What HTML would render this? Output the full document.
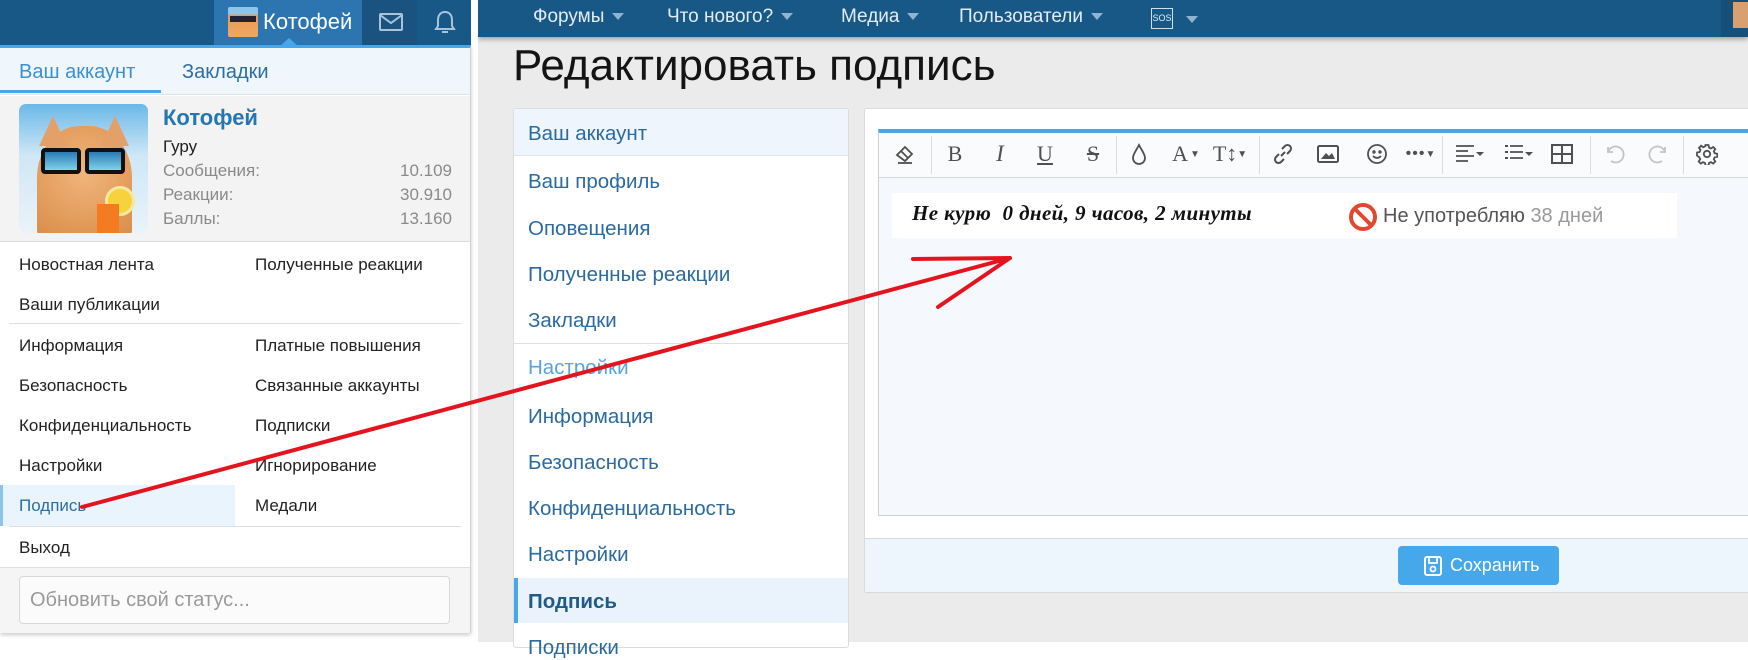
<!DOCTYPE html>
<html><head><meta charset="utf-8">
<style>
*{margin:0;padding:0;box-sizing:border-box}
body{width:1748px;height:642px;overflow:hidden;background:#fff;font-family:"Liberation Sans",sans-serif;position:relative}
.a{position:absolute;white-space:nowrap}
.lp{font-size:17px;color:#222}
.sb{font-size:20.5px;color:#2b6aa0}
.nav{font-size:19px;color:#e3ecf4}
.tri{display:inline-block;width:0;height:0;border-left:6px solid transparent;border-right:6px solid transparent;border-top:7px solid #8fb3d1;vertical-align:middle;margin-left:8px}
.ti{position:absolute;top:142px;height:24px;display:flex;align-items:center;justify-content:center;color:#505050}
.sep{position:absolute;top:136px;width:1px;height:38px;background:#dcdcdc}
</style></head><body>

<!-- RIGHT PAGE -->
<div class="a" style="left:478px;top:0;width:1270px;height:642px;background:#ebebeb"></div>
<div class="a" style="left:478px;top:0;width:1270px;height:37px;background:#185886;box-shadow:0 2px 5px rgba(0,0,0,.35)"></div>
<div class="a" style="left:1721px;top:0;width:27px;height:37px;background:#164f79"></div>
<div class="a" style="left:1733px;top:2px;width:15px;height:26px;background:#d8a070"></div>
<div class="a nav" style="left:533px;top:6px">Форумы<span class="tri"></span></div>
<div class="a nav" style="left:667px;top:6px">Что нового?<span class="tri"></span></div>
<div class="a nav" style="left:841px;top:6px">Медиа<span class="tri"></span></div>
<div class="a nav" style="left:959px;top:6px">Пользователи<span class="tri"></span></div>
<div class="a" style="left:1151px;top:8px;width:22px;height:21px;border:1.5px solid #cfe0ee;color:#e3ecf4;font-size:9px;line-height:18px;text-align:center">SOS</div>
<div class="a" style="left:1178px;top:11px"><span class="tri"></span></div>

<div class="a" style="left:513px;top:41px;font-size:44px;color:#141414">Редактировать подпись</div>

<!-- sidebar -->
<div class="a" style="left:513px;top:108px;width:336px;height:540px;background:#fff;border:1px solid #dcdcdc;border-radius:3px"></div>
<div class="a" style="left:514px;top:109px;width:334px;height:47px;background:#eef5fc;border-bottom:1px solid #dde6ee"></div>
<div class="a" style="left:514px;top:343px;width:334px;height:1px;background:#e0e0e0"></div>
<div class="a" style="left:514px;top:578px;width:334px;height:45px;background:#eaf3fc;border-left:4px solid #47a7eb"></div>
<div class="a sb" style="left:528px;top:122px">Ваш аккаунт</div>
<div class="a sb" style="left:528px;top:170px">Ваш профиль</div>
<div class="a sb" style="left:528px;top:217px">Оповещения</div>
<div class="a sb" style="left:528px;top:263px">Полученные реакции</div>
<div class="a sb" style="left:528px;top:309px">Закладки</div>
<div class="a sb" style="left:528px;top:356px;color:#5aa4dd">Настройки</div>
<div class="a sb" style="left:528px;top:405px">Информация</div>
<div class="a sb" style="left:528px;top:451px">Безопасность</div>
<div class="a sb" style="left:528px;top:497px">Конфиденциальность</div>
<div class="a sb" style="left:528px;top:543px">Настройки</div>
<div class="a sb" style="left:528px;top:590px;font-weight:bold;color:#1f5a88">Подпись</div>
<div class="a sb" style="left:528px;top:636px">Подписки</div>

<!-- main panel -->
<div class="a" style="left:864px;top:108px;width:890px;height:485px;background:#fff;border:1px solid #dcdcdc;border-radius:3px"></div>
<div class="a" style="left:878px;top:129px;width:880px;height:387px;border:1px solid #d0d0d0;border-top:4px solid #47a7eb;background:#f5f9fd"></div>
<div class="a" style="left:879px;top:133px;width:870px;height:45px;background:#fafbfc;border-bottom:1px solid #d8d8d8"></div>
<div class="a" style="left:865px;top:538px;width:883px;height:55px;background:#edf5fd;border-top:1px solid #d8d8d8;border-bottom:1px solid #d8d8d8"></div>
<div class="a" style="left:1398px;top:546px;width:161px;height:39px;background:#47a7eb;border-radius:4px;color:#fff;font-size:18px;line-height:39px;padding-left:52px">Сохранить</div>
<svg class="a" style="left:1424px;top:556px" width="18" height="20" viewBox="0 0 18 20"><rect x="1" y="1" width="16" height="18" rx="2" fill="none" stroke="#fff" stroke-width="2"/><rect x="5" y="1" width="8" height="6" fill="none" stroke="#fff" stroke-width="1.8"/><circle cx="9" cy="13" r="2.5" fill="none" stroke="#fff" stroke-width="1.8"/></svg>

<!-- toolbar -->
<div class="sep" style="left:931px"></div><div class="sep" style="left:1116px"></div><div class="sep" style="left:1259px"></div>
<div class="sep" style="left:1442px"></div><div class="sep" style="left:1590px"></div><div class="sep" style="left:1683px"></div>
<svg class="a" style="left:894px;top:143px" width="22" height="22" viewBox="0 0 22 22" fill="none" stroke="#505050" stroke-width="1.8"><path d="M3 12 L11 4 L18 11 L11 18 Z M7 8 L14 15"/><path d="M4 20 H18"/></svg>
<div class="ti" style="left:944px;width:22px;font-size:22px;font-family:'Liberation Serif',serif">B</div>
<div class="ti" style="left:989px;width:22px;font-size:23px;font-family:'Liberation Serif',serif;font-style:italic">I</div>
<div class="ti" style="left:1034px;width:22px;font-size:22px;font-family:'Liberation Serif',serif;text-decoration:underline">U</div>
<div class="ti" style="left:1082px;width:22px;font-size:22px;font-family:'Liberation Serif',serif;text-decoration:line-through">S</div>
<svg class="a" style="left:1130px;top:143px" width="18" height="22" viewBox="0 0 18 22" fill="none" stroke="#505050" stroke-width="1.8"><path d="M9 2 C6 8 3 11 3 15 A6 6 0 0 0 15 15 C15 11 12 8 9 2Z"/></svg>
<div class="ti" style="left:1168px;width:36px;font-size:22px;font-family:'Liberation Serif',serif">A<span style="font-size:10px;margin-left:2px">▼</span></div>
<div class="ti" style="left:1212px;width:36px;font-size:22px;font-family:'Liberation Serif',serif">T↕<span style="font-size:10px">▼</span></div>
<svg class="a" style="left:1272px;top:143px" width="22" height="22" viewBox="0 0 22 22" fill="none" stroke="#505050" stroke-width="2"><path d="M9 13 L13 9 M7 11 L4 14 A3.5 3.5 0 0 0 9 19 L12 16 M15 11 L18 8 A3.5 3.5 0 0 0 13 3 L10 6"/></svg>
<svg class="a" style="left:1317px;top:145px" width="22" height="18" viewBox="0 0 22 18"><rect x="1" y="1" width="20" height="16" rx="1.5" fill="none" stroke="#505050" stroke-width="2"/><path d="M4 14 L9 8 L12 11 L15 8 L18 14Z" fill="#505050"/></svg>
<svg class="a" style="left:1366px;top:143px" width="22" height="22" viewBox="0 0 22 22" fill="none" stroke="#505050" stroke-width="1.8"><circle cx="11" cy="11" r="9"/><circle cx="8" cy="9" r=".8" fill="#505050"/><circle cx="14" cy="9" r=".8" fill="#505050"/><path d="M7 13 Q11 17 15 13"/></svg>
<div class="ti" style="left:1403px;width:36px;font-size:16px;letter-spacing:1px">•••<span style="font-size:10px">▼</span></div>
<svg class="a" style="left:1455px;top:144px" width="30" height="20" viewBox="0 0 30 20"><path d="M1 2H19M1 7H13M1 12H19M1 17H13" stroke="#505050" stroke-width="1.8"/><path d="M21 8H29L25 12Z" fill="#505050"/></svg>
<svg class="a" style="left:1504px;top:144px" width="30" height="20" viewBox="0 0 30 20"><path d="M6 2H19M6 8H19M6 14H19" stroke="#505050" stroke-width="1.8"/><path d="M1 1h3v2H1zM1 7h3v2H1zM1 13h3v2H1z" fill="#505050"/><path d="M21 8H29L25 12Z" fill="#505050"/></svg>
<svg class="a" style="left:1551px;top:144px" width="22" height="20" viewBox="0 0 22 20" fill="none" stroke="#505050" stroke-width="2"><rect x="1" y="1" width="20" height="18"/><path d="M11 1V19M1 10H21"/></svg>
<svg class="a" style="left:1603px;top:143px" width="22" height="22" viewBox="0 0 22 22" fill="none" stroke="#c4c4c4" stroke-width="1.8"><path d="M5 4V9H10M5 9 A8 8 0 1 1 8 18"/></svg>
<svg class="a" style="left:1648px;top:143px" width="22" height="22" viewBox="0 0 22 22" fill="none" stroke="#c4c4c4" stroke-width="1.8"><path d="M17 4V9H12M17 9 A8 8 0 1 0 14 18"/></svg>
<svg class="a" style="left:1696px;top:143px" width="22" height="22" viewBox="0 0 22 22" fill="none" stroke="#505050" stroke-width="1.8"><circle cx="11" cy="11" r="3.2"/><path d="M9.5 2h3l.5 2.6 2 .9 2.2-1.5 2.1 2.1-1.5 2.2.9 2 2.6.5v3l-2.6.5-.9 2 1.5 2.2-2.1 2.1-2.2-1.5-2 .9-.5 2.6h-3l-.5-2.6-2-.9-2.2 1.5-2.1-2.1 1.5-2.2-.9-2L1 12.5v-3l2.6-.5.9-2L3 4.8 5.1 2.7 7.3 4.2l2-.9z"/></svg>

<!-- signature -->
<div class="a" style="left:892px;top:193px;width:785px;height:45px;background:#fff"></div>
<div class="a" style="left:912px;top:201px;font-family:'Liberation Serif',serif;font-weight:bold;font-style:italic;font-size:21px;color:#111;letter-spacing:0.4px">Не курю&nbsp; 0 дней, 9 часов, 2 минуты</div>
<svg class="a" style="left:1347px;top:201px" width="32" height="32" viewBox="0 0 32 32"><circle cx="16" cy="16" r="12" fill="none" stroke="#e0492f" stroke-width="4"/><path d="M8 8 L24 24" stroke="#e0492f" stroke-width="4"/></svg>
<div class="a" style="left:1383px;top:205px;font-size:20px;color:#555">Не употребляю <span style="color:#999">38 дней</span></div>

<!-- LEFT PANEL -->
<div class="a" style="left:0;top:0;width:478px;height:642px;background:#fff"></div>
<div class="a" style="left:0;top:0;width:471px;height:45px;background:#185886"></div>
<div class="a" style="left:214px;top:0;width:148px;height:45px;background:#2c75b1"></div>
<div class="a" style="left:362px;top:0;width:55px;height:45px;background:#1a5380"></div>
<div class="a" style="left:228px;top:7px;width:30px;height:30px;background:linear-gradient(#8cc6ec 0,#8cc6ec 25%,#e69a57 25%,#f0a860 100%);border-radius:2px"></div>
<div class="a" style="left:230px;top:16px;width:26px;height:6px;background:#223"></div>
<div class="a" style="left:263px;top:9px;font-size:22px;color:#fff">Котофей</div>
<svg class="a" style="left:379px;top:13px" width="24" height="18" viewBox="0 0 24 18" fill="none" stroke="#a8c4dc" stroke-width="2"><rect x="1" y="1" width="22" height="16" rx="1"/><path d="M1 2 L12 10 L23 2"/></svg>
<svg class="a" style="left:434px;top:10px" width="22" height="26" viewBox="0 0 22 26" fill="none" stroke="#a8c4dc" stroke-width="2"><path d="M11 2 C6 2 4 6 4 10 V16 L2 19 H20 L18 16 V10 C18 6 16 2 11 2Z M8 22 H14"/></svg>
<div class="a" style="left:280px;top:38px;width:0;height:0;border-left:9px solid transparent;border-right:9px solid transparent;border-bottom:8px solid #47a7eb"></div>
<div class="a" style="left:0;top:45px;width:471px;height:588px;background:#fff;border-top:3px solid #47a7eb;border-right:1px solid #d0d0d0;box-shadow:0 2px 4px rgba(0,0,0,.2)"></div>
<div class="a" style="left:0;top:48px;width:470px;height:47px;background:#eff6fc;border-bottom:1px solid #dde3e8"></div>
<div class="a" style="left:0;top:90px;width:161px;height:3px;background:#47a7eb"></div>
<div class="a" style="left:19px;top:61px;font-size:20px;color:#3d8fd0">Ваш аккаунт</div>
<div class="a" style="left:182px;top:61px;font-size:20px;color:#2c6ea3">Закладки</div>
<div class="a" style="left:0;top:96px;width:470px;height:146px;background:#f3f3f3;border-bottom:1px solid #dcdcdc"></div>
<div class="a" style="left:19px;top:104px;width:129px;height:129px;border-radius:7px;overflow:hidden;background:linear-gradient(180deg,#6bb8e8 0%,#cfe7f6 40%,#e9f3f9 100%)">
  <div style="position:absolute;left:18px;top:22px;width:95px;height:115px;border-radius:45% 45% 10% 10%;background:radial-gradient(circle at 50% 40%,#f0b67c,#d98a46)"></div>
  <div style="position:absolute;left:20px;top:12px;width:0;height:0;border-left:14px solid transparent;border-right:14px solid transparent;border-bottom:30px solid #e3a068"></div>
  <div style="position:absolute;left:82px;top:12px;width:0;height:0;border-left:14px solid transparent;border-right:14px solid transparent;border-bottom:30px solid #e3a068"></div>
  <div style="position:absolute;left:22px;top:44px;width:40px;height:26px;background:linear-gradient(#2a7bb8,#7fd2e8);border:4px solid #111;border-radius:4px"></div>
  <div style="position:absolute;left:66px;top:44px;width:40px;height:26px;background:linear-gradient(#2a7bb8,#7fd2e8);border:4px solid #111;border-radius:4px"></div>
  <div style="position:absolute;left:86px;top:82px;width:30px;height:30px;border-radius:50%;background:#f7d23c;border:3px solid #f5e9a0"></div>
  <div style="position:absolute;left:78px;top:100px;width:22px;height:30px;background:#f27c1f"></div>
</div>
<div class="a" style="left:163px;top:105px;font-size:22px;font-weight:bold;color:#2577b1">Котофей</div>
<div class="a lp" style="left:163px;top:137px;color:#222">Гуру</div>
<div class="a lp" style="left:163px;top:161px;color:#8a8a8a">Сообщения:</div>
<div class="a lp" style="left:163px;top:185px;color:#8a8a8a">Реакции:</div>
<div class="a lp" style="left:163px;top:209px;color:#8a8a8a">Баллы:</div>
<div class="a lp" style="left:400px;top:161px;color:#8a8a8a">10.109</div>
<div class="a lp" style="left:400px;top:185px;color:#8a8a8a">30.910</div>
<div class="a lp" style="left:400px;top:209px;color:#8a8a8a">13.160</div>

<div class="a" style="left:9px;top:323px;width:452px;height:1px;background:#dedede"></div>
<div class="a" style="left:0;top:485px;width:235px;height:41px;background:#eaf4fd;border-left:3px solid #8cc4ee"></div>
<div class="a" style="left:9px;top:526px;width:452px;height:1px;background:#dedede"></div>
<div class="a lp" style="left:19px;top:255px">Новостная лента</div>
<div class="a lp" style="left:255px;top:255px">Полученные реакции</div>
<div class="a lp" style="left:19px;top:295px">Ваши публикации</div>
<div class="a lp" style="left:19px;top:336px">Информация</div>
<div class="a lp" style="left:255px;top:336px">Платные повышения</div>
<div class="a lp" style="left:19px;top:376px">Безопасность</div>
<div class="a lp" style="left:255px;top:376px">Связанные аккаунты</div>
<div class="a lp" style="left:19px;top:416px">Конфиденциальность</div>
<div class="a lp" style="left:255px;top:416px">Подписки</div>
<div class="a lp" style="left:19px;top:456px">Настройки</div>
<div class="a lp" style="left:255px;top:456px">Игнорирование</div>
<div class="a lp" style="left:19px;top:496px;color:#2c6ea3">Подпись</div>
<div class="a lp" style="left:255px;top:496px">Медали</div>
<div class="a lp" style="left:19px;top:538px">Выход</div>
<div class="a" style="left:0;top:567px;width:470px;height:66px;background:#f5f5f5;border-top:1px solid #e0e0e0"></div>
<div class="a" style="left:19px;top:576px;width:431px;height:48px;background:#fbfbfb;border:1px solid #d8d8d8;border-radius:4px;font-size:20px;color:#9a9a9a;padding:12px 0 0 10px">Обновить свой статус...</div>

<!-- red arrow -->
<svg class="a" style="left:0;top:0" width="1748" height="642" viewBox="0 0 1748 642"><path d="M82 507 L1010 258 M913 259 L1010 258 L938 307" fill="none" stroke="#e3141e" stroke-width="4" stroke-linecap="round" stroke-linejoin="round"/></svg>
</body></html>
